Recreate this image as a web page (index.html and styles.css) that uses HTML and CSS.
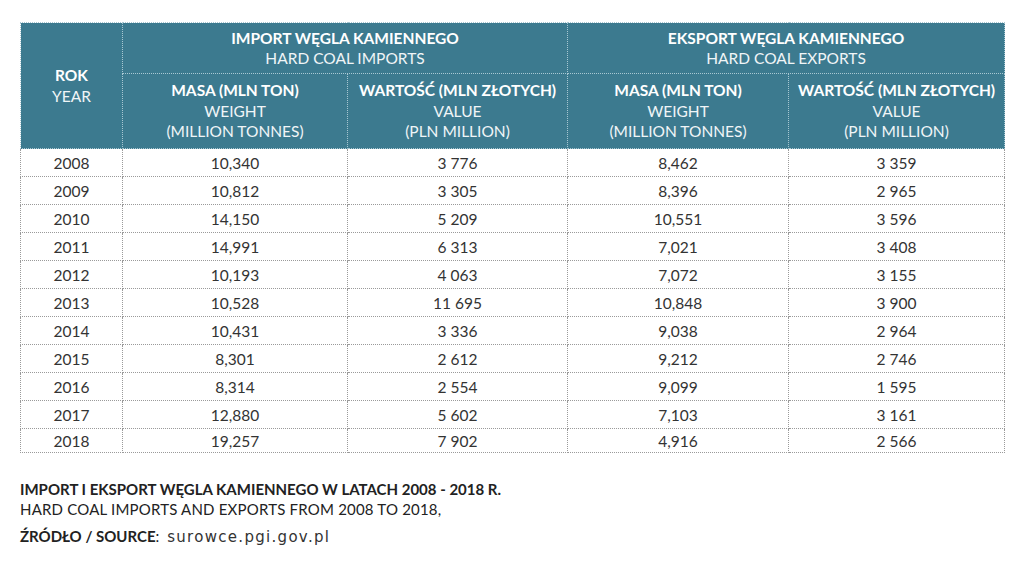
FILE: index.html
```html
<!DOCTYPE html>
<html lang="pl">
<head>
<meta charset="utf-8">
<link rel="stylesheet" href="styles.css">
</head>
<body>
<div class="page">
<table class="coal">
  <colgroup>
    <col class="c-year"><col class="c-a"><col class="c-b"><col class="c-c"><col class="c-d">
  </colgroup>
  <thead>
    <tr class="h1">
      <th rowspan="2" class="year-h"><b>ROK</b><br>YEAR</th>
      <th colspan="2"><b>IMPORT WĘGLA KAMIENNEGO</b><br>HARD COAL IMPORTS</th>
      <th colspan="2"><b>EKSPORT WĘGLA KAMIENNEGO</b><br>HARD COAL EXPORTS</th>
    </tr>
    <tr class="h2">
      <th><b>MASA (MLN TON)</b><br>WEIGHT<br>(MILLION TONNES)</th>
      <th><b>WARTOŚĆ (MLN ZŁOTYCH)</b><br>VALUE<br>(PLN MILLION)</th>
      <th><b>MASA (MLN TON)</b><br>WEIGHT<br>(MILLION TONNES)</th>
      <th><b>WARTOŚĆ (MLN ZŁOTYCH)</b><br>VALUE<br>(PLN MILLION)</th>
    </tr>
  </thead>
  <tbody>
    <tr><td>2008</td><td>10,340</td><td>3 776</td><td>8,462</td><td>3 359</td></tr>
    <tr><td>2009</td><td>10,812</td><td>3 305</td><td>8,396</td><td>2 965</td></tr>
    <tr><td>2010</td><td>14,150</td><td>5 209</td><td>10,551</td><td>3 596</td></tr>
    <tr><td>2011</td><td>14,991</td><td>6 313</td><td>7,021</td><td>3 408</td></tr>
    <tr><td>2012</td><td>10,193</td><td>4 063</td><td>7,072</td><td>3 155</td></tr>
    <tr><td>2013</td><td>10,528</td><td>11 695</td><td>10,848</td><td>3 900</td></tr>
    <tr><td>2014</td><td>10,431</td><td>3 336</td><td>9,038</td><td>2 964</td></tr>
    <tr><td>2015</td><td>8,301</td><td>2 612</td><td>9,212</td><td>2 746</td></tr>
    <tr><td>2016</td><td>8,314</td><td>2 554</td><td>9,099</td><td>1 595</td></tr>
    <tr><td>2017</td><td>12,880</td><td>5 602</td><td>7,103</td><td>3 161</td></tr>
    <tr class="last"><td>2018</td><td>19,257</td><td>7 902</td><td>4,916</td><td>2 566</td></tr>
  </tbody>
</table>
<div class="caption">
  <p class="cap-title">IMPORT I EKSPORT WĘGLA KAMIENNEGO W LATACH 2008 - 2018 R.</p>
  <p class="cap-sub">HARD COAL IMPORTS AND EXPORTS FROM 2008 TO 2018,</p>
  <p class="cap-src"><b>ŹRÓDŁO / SOURCE</b>: <span class="url">surowce.pgi.gov.pl</span></p>
</div>
</div>
</body>
</html>
```
FILE: styles.css
```css
html, body {
  margin: 0;
  padding: 0;
  background: #ffffff;
}
body {
  font-family: "Lato", "Liberation Sans", sans-serif;
  color: #333333;
}
.page {
  padding: 22px 20px 0 20px;
  width: 984px;
}
.coal {
  width: 984px;
  border-collapse: collapse;
  table-layout: fixed;
  border: 1px dotted #9a9a9a;
}
.c-year { width: 102px; }
.c-a { width: 225px; }
.c-b { width: 220px; }
.c-c { width: 221px; }
.c-d { width: 216px; }
.coal th {
  background: #3c7a8f;
  color: #f0f5f7;
  font-weight: normal;
  font-size: 15.5px;
  line-height: 20.5px;
  border: 1px dotted #a9c8d3;
  padding: 0;
  vertical-align: middle;
}
.coal th b { font-weight: 700; color: #ffffff; }
.h1 th { height: 50px; }
.h2 th { height: 74px; }
.year-h { line-height: 22px; }
.coal td {
  text-align: center;
  font-size: 15.5px;
  color: #333333;
  border: 1px dotted #9a9a9a;
  height: 27px;
  padding: 0;
  line-height: 20px;
}
.coal tr.last td { height: 23px; }
.caption { padding-top: 26px; }
.caption p { margin: 0; font-size: 15px; color: #222; }
.cap-title { font-weight: 700; line-height: 20px; }
.cap-sub { line-height: 20px; color: #333; letter-spacing: 0.2px; }
.cap-src { line-height: 22px; margin-top: 6px !important; }
.cap-src b { font-weight: 700; }
.url {
  font-family: "DejaVu Sans", "Lato", sans-serif;
  letter-spacing: 1.3px;
  margin-left: 4px;
  color: #333;
}
```
